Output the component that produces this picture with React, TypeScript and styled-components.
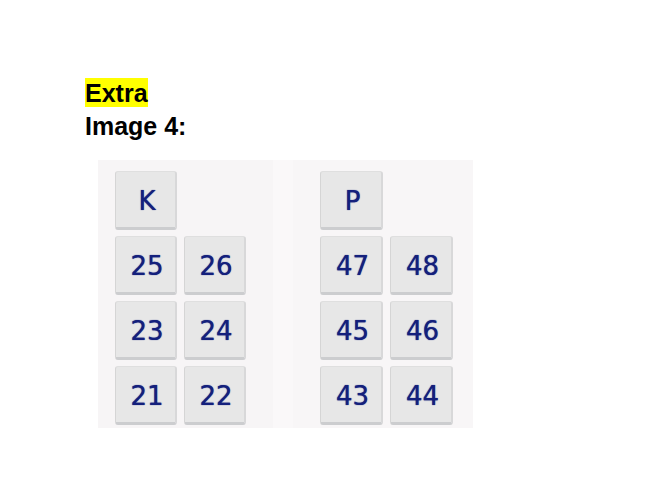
import React from "react";
import styled, { createGlobalStyle } from "styled-components";

const GlobalStyle = createGlobalStyle`
  body {
    margin: 0;
    background: #ffffff;
  }
`;

const Page = styled.main`
  padding: 77px 24px 24px 85px;
  font-family: "Liberation Sans", Arial, sans-serif;
  color: #000000;
`;

const Heading = styled.h1`
  margin: 0;
  font-size: 25px;
  font-weight: 700;
  line-height: 33px;
`;

const Highlight = styled.mark`
  padding-top: 1px;
  background: #ffff00;
  color: inherit;
`;

const Board = styled.section`
  display: flex;
  gap: 74px;
  width: fit-content;
  margin: 17px 0 0 13px;
  padding: 11px 20px 3px 17px;
  background: linear-gradient(
    to right,
    #f7f5f6 0 175px,
    #faf8f9 175px 195px,
    #f8f6f7 195px
  );
`;

const KeyBlock = styled.div<{ $keyWidth: number }>`
  display: grid;
  grid-template-columns: repeat(2, ${({ $keyWidth }) => $keyWidth}px);
  grid-auto-rows: 59px;
  gap: 6px 7px;
`;

const Key = styled.button`
  padding: 2px 0 0 3px;
  border: 1px solid #dfdfdf;
  border-left-color: #d5d5d5;
  border-right: 2px solid #d8d8d9;
  border-bottom: 3px solid #cccdcf;
  border-radius: 3px;
  background: #e7e7e7;
  color: #14207c;
  font-family: "DejaVu Sans", Verdana, sans-serif;
  font-size: 26px;
  line-height: 32px;
  text-align: center;
  text-shadow: 0 0 1px #14207c;
`;

const Blank = styled.span``;

const blocks = [
  { letter: "K", numbers: [25, 26, 23, 24, 21, 22], keyWidth: 62 },
  { letter: "P", numbers: [47, 48, 45, 46, 43, 44], keyWidth: 63 },
];

export default function App() {
  return (
    <>
      <GlobalStyle />
      <Page>
        <Heading>
          <Highlight>Extra</Highlight>
        </Heading>
        <Heading as="h2">Image 4:</Heading>
        <Board>
          {blocks.map(({ letter, numbers, keyWidth }) => (
            <KeyBlock key={letter} $keyWidth={keyWidth}>
              <Key type="button">{letter}</Key>
              <Blank />
              {numbers.map((n) => (
                <Key type="button" key={n}>
                  {n}
                </Key>
              ))}
            </KeyBlock>
          ))}
        </Board>
      </Page>
    </>
  );
}
